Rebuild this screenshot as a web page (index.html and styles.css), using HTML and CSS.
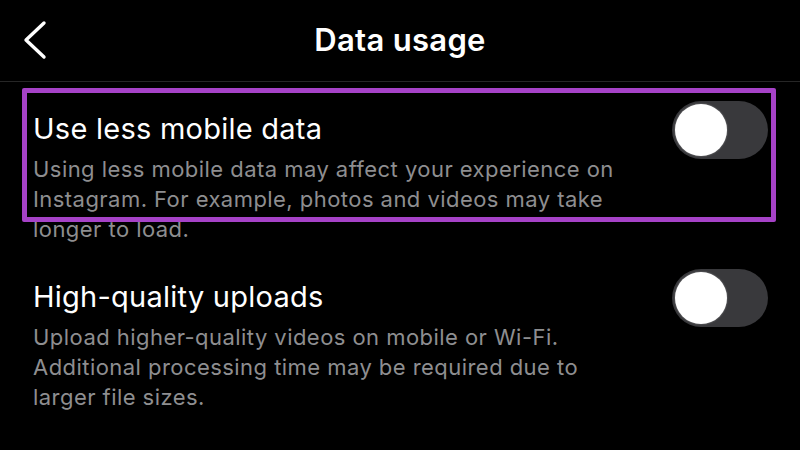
FILE: index.html
```html
<!DOCTYPE html>
<html>
<head>
    <title>Data usage</title>
    <meta charset="UTF-8">
    <link rel="stylesheet" href="styles.css">
</head>
<body>
    <div class="screen">
        <!-- 顶部导航 -->
        <header class="nav-bar">
            <button class="back-btn" aria-label="Back">
                <svg width="28" height="40" viewBox="0 0 28 40">
                    <polyline points="23,3 5,20 23,37" fill="none" stroke="#fff" stroke-width="3.4" stroke-linecap="round" stroke-linejoin="round"/>
                </svg>
            </button>
            <h1 class="nav-title">Data usage</h1>
        </header>

        <div class="settings">
            <div class="setting-row">
                <div class="setting-text">
                    <div class="setting-title">Use less mobile data</div>
                    <div class="setting-desc">Using less mobile data may affect your experience on Instagram. For example, photos and videos may take longer to load.</div>
                </div>
                <div class="toggle"><span class="knob"></span></div>
            </div>

            <div class="setting-row">
                <div class="setting-text">
                    <div class="setting-title">High-quality uploads</div>
                    <div class="setting-desc">Upload higher-quality videos on mobile or Wi-Fi. Additional processing time may be required due to larger file sizes.</div>
                </div>
                <div class="toggle"><span class="knob"></span></div>
            </div>
        </div>

        <!-- 高亮框 -->
        <div class="highlight"></div>
    </div>
</body>
</html>
```

FILE: styles.css
```css
body {
    margin: 0;
    padding: 0;
    background: #000;
    overflow: hidden;
    font-family: Inter, "Liberation Sans", sans-serif;
    color: #fff;
}

.screen {
    position: relative;
    width: 800px;
    height: 450px;
}

.nav-bar {
    height: 81px;
    display: flex;
    align-items: center;
    justify-content: center;
    position: relative;
    border-bottom: 1px solid #262626;
}

.back-btn {
    position: absolute;
    left: 21px;
    top: 20px;
    padding: 0;
    background: none;
    border: none;
    display: flex;
}

.nav-title {
    margin: 0;
    font-size: 31px;
    font-weight: 600;
    letter-spacing: 0.3px;
    padding-bottom: 2px;
}

.settings {
    padding: 29px 30px 0 33px;
    display: flex;
    flex-direction: column;
    gap: 35px;
}

.setting-row {
    display: flex;
    align-items: flex-start;
    justify-content: space-between;
}

.setting-text {
    width: 610px;
}

.setting-title {
    font-size: 29px;
    line-height: 36px;
    letter-spacing: 0.25px;
    margin-bottom: 7px;
}

.setting-desc {
    font-size: 22px;
    line-height: 30px;
    letter-spacing: 0.45px;
    color: #8e8e90;
}

.toggle {
    width: 96px;
    height: 58px;
    border-radius: 29px;
    background: #39393c;
    margin-top: -10px;
    margin-right: 2px;
    display: flex;
    align-items: center;
    padding-left: 3px;
    box-sizing: border-box;
}

.knob {
    width: 52px;
    height: 52px;
    border-radius: 50%;
    background: #fff;
    box-shadow: 0 0 2px rgba(255, 255, 255, 0.4);
}

.highlight {
    position: absolute;
    left: 22px;
    top: 88px;
    width: 754px;
    height: 134px;
    box-sizing: border-box;
    border: 5px solid #a642c7;
    border-radius: 2px;
}
```
